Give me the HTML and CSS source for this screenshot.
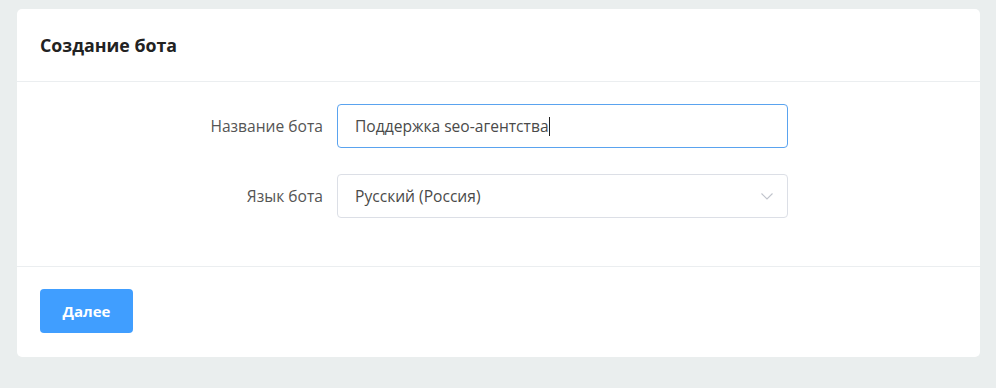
FILE: index.html
```html
<!DOCTYPE html>
<html lang="ru">
<head>
<meta charset="utf-8">
<link rel="stylesheet" href="styles.css">
</head>
<body>
<div class="card">
  <div class="card-header">Создание бота</div>
  <div class="card-body">
    <div class="form">
      <label class="label">Название бота</label>
      <div class="field field-focus"><span class="value">Поддержка seo-агентства</span><span class="caret"></span></div>
      <label class="label">Язык бота</label>
      <div class="field field-select"><span class="value">Русский (Россия)</span>
        <svg class="chevron" width="12" height="7" viewBox="0 0 12 7"><path d="M0.5 0.5 L6 6 L11.5 0.5" fill="none" stroke="#c0c4cc" stroke-width="1.1"/></svg>
      </div>
    </div>
  </div>
  <div class="card-footer">
    <button class="btn">Далее</button>
  </div>
</div>
</body>
</html>
```
FILE: styles.css
```css
html, body { margin: 0; padding: 0; }
body {
  background: #eaeeee;
  font-family: "Open Sans", "Noto Sans", sans-serif;
  width: 996px;
  height: 388px;
  overflow: hidden;
}
.card {
  margin: 9px 16px 0 17px;
  background: #fff;
  border-radius: 5px;
  height: 348px;
  display: flex;
  flex-direction: column;
}
.card-header {
  height: 73px;
  box-sizing: border-box;
  padding: 0 23px;
  display: flex;
  align-items: center;
  font-size: 17.8px;
  font-weight: 700;
  color: #222;
  border-bottom: 1px solid #ebeef0;
}
.card-body {
  padding: 22px 0 48px;
  border-bottom: 1px solid #ebeef0;
}
.form {
  display: grid;
  grid-template-columns: 306px 451px;
  column-gap: 14px;
  row-gap: 26px;
  align-items: center;
}
.label {
  text-align: right;
  font-size: 15.6px;
  color: #555;
}
.field {
  height: 44px;
  box-sizing: border-box;
  border: 1px solid #dcdfe6;
  border-radius: 4px;
  padding: 0 17px;
  display: flex;
  align-items: center;
  font-size: 15.6px;
  color: #4a4a4a;
}
.field-focus { border-color: #5aa3ef; }
.caret {
  display: inline-block;
  width: 1px;
  height: 19px;
  background: #222;
}
.field-select { justify-content: space-between; padding-right: 14px; }
.chevron { margin-top: 1px; }
.card-footer {
  padding: 22px 23px;
}
.btn {
  width: 93px;
  height: 44px;
  border: 0;
  border-radius: 4px;
  background: #409eff;
  color: #fff;
  font-family: "Open Sans", "Noto Sans", sans-serif;
  font-weight: 700;
  font-size: 15px;
  padding: 0;
}
```
